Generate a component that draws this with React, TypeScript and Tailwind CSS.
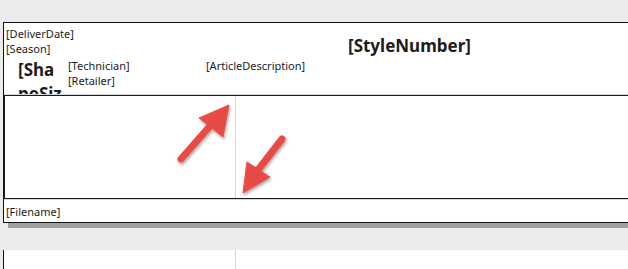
const font = "font-['Noto_Sans',sans-serif]";

function Arrows() {
  return (
    <svg
      className="pointer-events-none absolute left-0 top-0"
      width="628"
      height="269"
      viewBox="0 0 628 269"
      aria-hidden="true"
    >
      <defs>
        <filter id="arrowShadow" x="-20%" y="-20%" width="140%" height="140%">
          <feDropShadow dx="1" dy="2" stdDeviation="1.5" floodColor="#000" floodOpacity="0.35" />
        </filter>
      </defs>
      <g fill="#e84c44" stroke="#e84c44" filter="url(#arrowShadow)">
        {/* up-right arrow */}
        <line x1="181" y1="159" x2="210" y2="126" strokeWidth="7" strokeLinecap="round" />
        <polygon points="229,105 199,118 223,137" strokeWidth="1" strokeLinejoin="round" />
        {/* down-left arrow */}
        <line x1="282" y1="139" x2="258" y2="170" strokeWidth="7" strokeLinecap="round" />
        <polygon points="243,193 247,162 270,177" strokeWidth="1" strokeLinejoin="round" />
      </g>
    </svg>
  );
}

export default function App() {
  return (
    <div className={`relative h-[269px] w-[628px] overflow-hidden bg-[#ebebeb] pl-[3px] pt-[22px] text-[#1c1c1c] ${font}`}>
      {/* Report page */}
      <div className="w-[700px] border border-[#111] bg-white">
        {/* Page header band */}
        <div className="flex h-[72px] overflow-hidden border-b border-[#d8d8d8]">
          <div className="flex w-[340px] flex-col pl-[2px] pt-[3px] text-[11px] leading-[15px]">
            <div>[DeliverDate]</div>
            <div>[Season]</div>
            <div className="mt-[2px] flex">
              <div className="ml-[10px] h-[37px] w-[46px] overflow-hidden break-all pl-[2px] text-[17px] font-bold leading-[24px]">
                [ShapeSize]
              </div>
              <div className="ml-[6px] flex w-[138px] flex-col">
                <div>[Technician]</div>
                <div>[Retailer]</div>
              </div>
              <div>[ArticleDescription]</div>
            </div>
          </div>
          <div className="flex-1 pl-[4px] pt-[11px] text-[17px] font-bold leading-[24px]">
            [StyleNumber]
          </div>
        </div>

        {/* Detail band */}
        <div className="flex h-[104px] border-y border-l border-[#1a1a1a]">
          <div className="w-[231px] border-r border-[#d6d6d6]" />
          <div className="flex-1" />
        </div>

        {/* Page footer band */}
        <div className="h-[23px] border-t border-[#d8d8d8] pl-[2px] pt-[4px] text-[11px] leading-[15px]">
          [Filename]
        </div>
      </div>

      {/* Page shadow */}
      <div className="ml-[5px] h-[5px] w-[700px] bg-[#9f9f9f]" />

      {/* Next page */}
      <div className="mt-[22px] flex h-[40px] w-[700px] border-l border-[#111] bg-white">
        <div className="w-[232px] border-r border-[#d6d6d6]" />
      </div>

      <Arrows />
    </div>
  );
}
